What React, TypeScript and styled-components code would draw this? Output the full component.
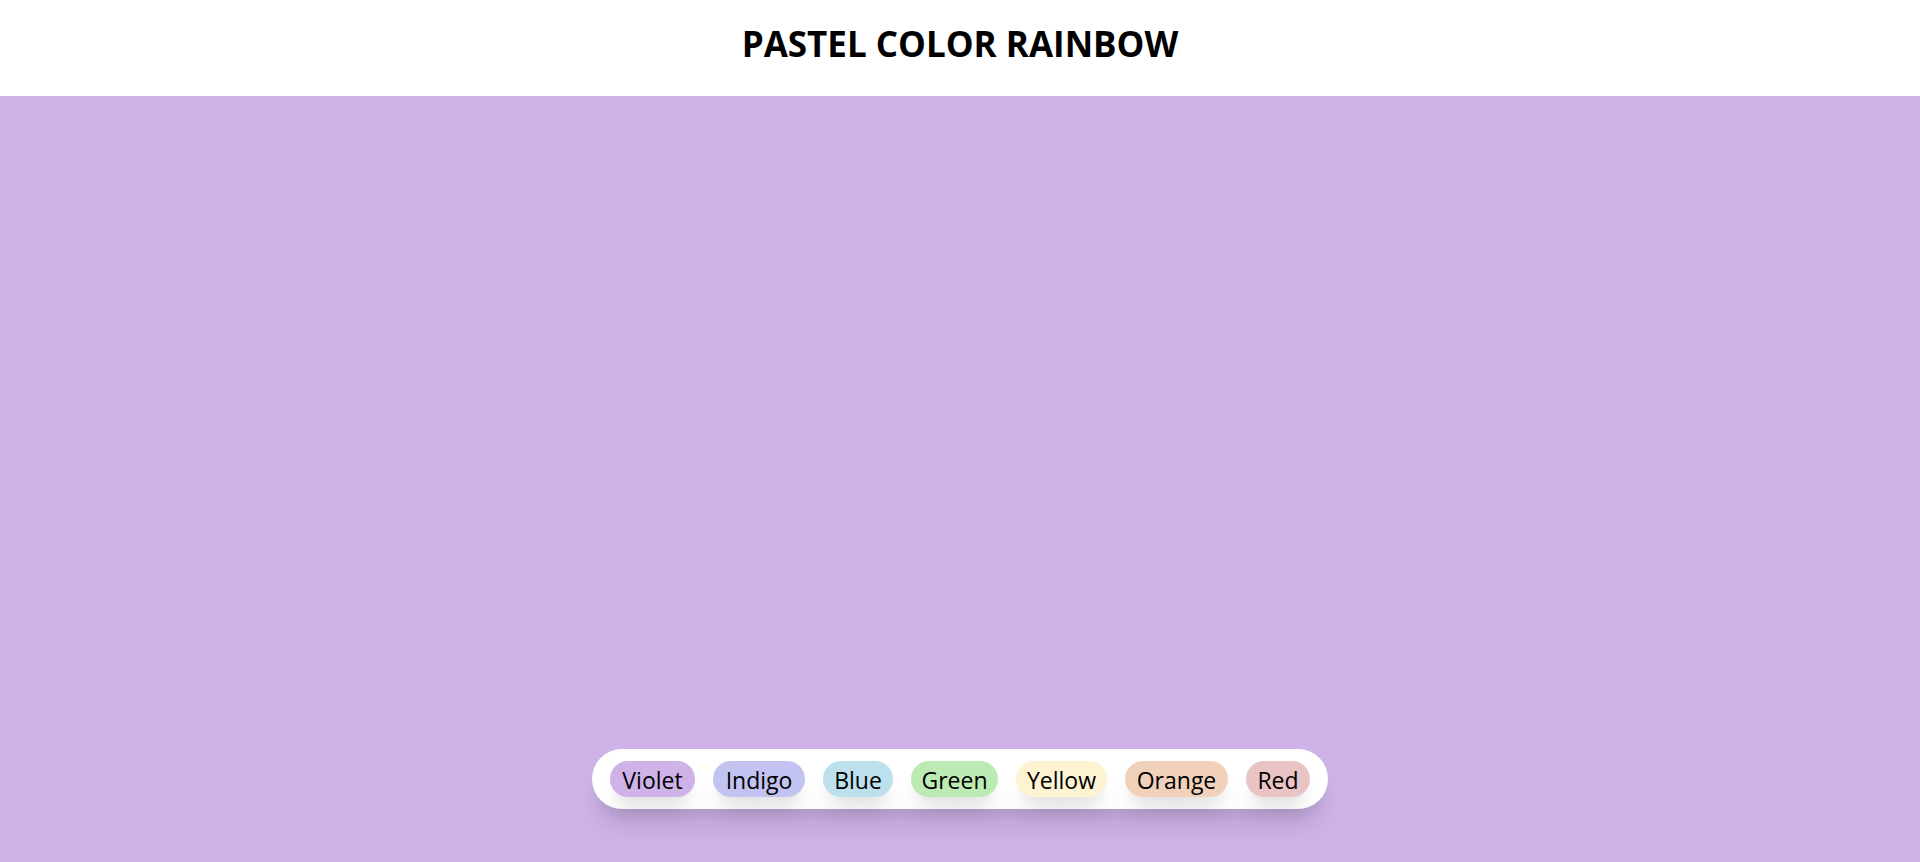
import { useState } from "react";
import styled, { createGlobalStyle } from "styled-components";

const SHADOW =
  "0 20px 25px -5px rgba(0, 0, 0, 0.1), 0 10px 10px -5px rgba(0, 0, 0, 0.04)";

const COLORS = [
  { name: "Violet", value: "#ceb2e8", width: 85 },
  { name: "Indigo", value: "#c2c3f0", width: 92 },
  { name: "Blue", value: "#bce1ec", width: 70 },
  { name: "Green", value: "#bbebb3", width: 87 },
  { name: "Yellow", value: "#fdf3d2", width: 91 },
  { name: "Orange", value: "#f2d1ba", width: 103 },
  { name: "Red", value: "#eac3c5", width: 64 },
];

const GlobalStyle = createGlobalStyle`
  *, *::before, *::after { box-sizing: border-box; }
  body {
    margin: 0;
    color: #000;
    font-family: "Segoe UI", "Open Sans", "Noto Sans", sans-serif;
  }
`;

const Page = styled.div`
  display: flex;
  flex-direction: column;
  min-height: 100vh;
`;

const Header = styled.header`
  padding: 20px 24px 28px;
  background: #fff;
  text-align: center;
`;

const Title = styled.h1`
  margin: 0;
  font-size: 35px;
  font-weight: 700;
  line-height: 48px;
`;

const Stage = styled.main<{ $color: string }>`
  flex: 1;
  display: flex;
  align-items: flex-end;
  justify-content: center;
  padding: 24px 12px 53px;
  background: ${({ $color }) => $color};
`;

const Palette = styled.div`
  display: flex;
  flex-wrap: wrap;
  justify-content: center;
  gap: 18px;
  padding: 12px 18px;
  border-radius: 30px;
  background: #fff;
  box-shadow: ${SHADOW};
`;

const Swatch = styled.button<{ $color: string; $width: number }>`
  width: ${({ $width }) => $width}px;
  height: 36px;
  padding: 2px 0 0;
  border: 0;
  border-radius: 18px;
  background: ${({ $color }) => $color};
  box-shadow: ${SHADOW};
  color: #000;
  font: inherit;
  font-size: 23px;
  line-height: 32px;
  white-space: nowrap;
  cursor: pointer;
`;

export default function App() {
  const [color, setColor] = useState(COLORS[0].value);

  return (
    <Page>
      <GlobalStyle />
      <Header>
        <Title>PASTEL COLOR RAINBOW</Title>
      </Header>
      <Stage $color={color}>
        <Palette>
          {COLORS.map(({ name, value, width }) => (
            <Swatch
              key={name}
              type="button"
              $color={value}
              $width={width}
              onClick={() => setColor(value)}
            >
              {name}
            </Swatch>
          ))}
        </Palette>
      </Stage>
    </Page>
  );
}
